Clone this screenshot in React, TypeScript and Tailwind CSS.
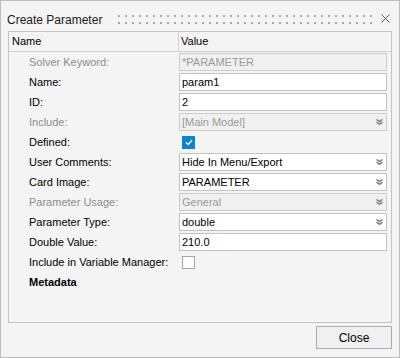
import React from "react";

type Row =
  | { label: string; kind: "text"; value: string; disabled?: boolean }
  | { label: string; kind: "select"; value: string; disabled?: boolean }
  | { label: string; kind: "check"; checked: boolean };

const rows: Row[] = [
  { label: "Solver Keyword:", kind: "text", value: "*PARAMETER", disabled: true },
  { label: "Name:", kind: "text", value: "param1" },
  { label: "ID:", kind: "text", value: "2" },
  { label: "Include:", kind: "select", value: "[Main Model]", disabled: true },
  { label: "Defined:", kind: "check", checked: true },
  { label: "User Comments:", kind: "select", value: "Hide In Menu/Export" },
  { label: "Card Image:", kind: "select", value: "PARAMETER" },
  { label: "Parameter Usage:", kind: "select", value: "General", disabled: true },
  { label: "Parameter Type:", kind: "select", value: "double" },
  { label: "Double Value:", kind: "text", value: "210.0" },
  { label: "Include in Variable Manager:", kind: "check", checked: false },
];

const DropArrow = () => (
  <svg width="7" height="6" viewBox="0 0 7 6" className="shrink-0">
    <path d="M0.5 0.5 L3.5 2.6 L6.5 0.5" fill="none" stroke="#808080" strokeWidth="1.5" />
    <path d="M0.5 3.2 L3.5 5.3 L6.5 3.2" fill="none" stroke="#808080" strokeWidth="1.5" />
  </svg>
);

const Field = ({ row }: { row: Row }) => {
  if (row.kind === "check") {
    return (
      <div className="flex h-[20px] items-center pl-[3px]">
        {row.checked ? (
          <div className="flex h-[13px] w-[13px] items-center justify-center bg-[#0a84d8]">
            <svg width="8" height="7" viewBox="0 0 8 7">
              <path d="M1 3.6 L3.2 5.6 L7 1.2" fill="none" stroke="#ffffff" strokeWidth="1.4" />
            </svg>
          </div>
        ) : (
          <div className="h-[13px] w-[13px] border border-[#a5a5a5] bg-white" />
        )}
      </div>
    );
  }
  const disabled = row.disabled;
  return (
    <div className="flex h-[20px] items-center pr-[4px]">
      <div
        className={`flex h-[18px] w-full items-center border pl-[2px] pr-[3px] ${
          disabled
            ? "border-[#cccccc] bg-[#f0f0f0] text-[#9a9a9a]"
            : "border-[#c3c3c3] bg-white text-black"
        }`}
      >
        <span className="flex-1 truncate">{row.value}</span>
        {row.kind === "select" && <DropArrow />}
      </div>
    </div>
  );
};

export default function App() {
  return (
    <div
      className="flex h-[358px] w-[400px] flex-col border border-[#bdbdbd] bg-[#f4f4f4] text-[11px] text-black"
      style={{ fontFamily: '"Liberation Sans", Arial, sans-serif' }}
    >
      {/* Title bar */}
      <div className="flex h-[30px] shrink-0 items-center pt-[7px] pl-[6px] pr-[9px]">
        <span className="text-[12px] text-[#1a1a1a]">Create Parameter</span>
        <svg className="ml-[16px] h-[9px] flex-1" preserveAspectRatio="xMinYMid slice">
          <defs>
            <pattern id="grip" width="7" height="7" patternUnits="userSpaceOnUse">
              <rect x="0" y="0" width="2" height="2" fill="#a8a8a8" />
            </pattern>
          </defs>
          <rect x="0" y="0" width="256" height="9" fill="url(#grip)" />
        </svg>
        <svg width="9" height="9" viewBox="0 0 9 9" className="ml-[6px] -mt-[2px]">
          <path d="M0.5 0.5 L8.5 8.5 M8.5 0.5 L0.5 8.5" stroke="#555" strokeWidth="1" />
        </svg>
      </div>

      {/* Property table */}
      <div className="mx-[7px] flex h-[292px] shrink-0 flex-col border border-[#c4c4c4]">
        <div className="flex h-[20px] shrink-0 border-b border-[#d0d0d0]">
          <div className="flex w-[170px] items-center border-r border-[#d0d0d0] pl-[3px]">Name</div>
          <div className="flex items-center pl-[2px]">Value</div>
        </div>
        {rows.map((row) => (
          <div key={row.label} className="flex h-[20px] shrink-0">
            <div
              className={`flex w-[170px] items-center pl-[20px] ${
                "disabled" in row && row.disabled ? "text-[#8c8c8c]" : "text-black"
              }`}
            >
              {row.label}
            </div>
            <div className="flex-1">
              <Field row={row} />
            </div>
          </div>
        ))}
        <div className="flex h-[20px] shrink-0 items-center pl-[20px] font-bold">Metadata</div>
      </div>

      {/* Footer */}
      <div className="flex justify-end pr-[7px] pt-[3px]">
        <button className="h-[23px] w-[76px] border border-[#adadad] bg-[#f0f0f0] text-[12px] text-black">
          Close
        </button>
      </div>
    </div>
  );
}
